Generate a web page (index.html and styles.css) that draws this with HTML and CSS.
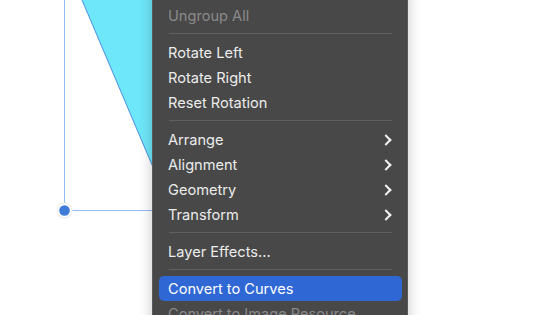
FILE: index.html
```html
<!DOCTYPE html>
<html lang="en">
<head>
  <meta charset="UTF-8" />
  <meta name="viewport" content="width=device-width, initial-scale=1.0" />
  <title>Context Menu</title>
  <link rel="stylesheet" href="styles.css">
</head>
<body>
  <div class="canvas">
    <svg class="art" width="560" height="315" viewBox="0 0 560 315">
      <polygon points="82,0 240,0 240,372" fill="#6de7f9" />
      <line x1="82" y1="0" x2="240" y2="372" stroke="#4b8fe2" stroke-width="1" />
      <line x1="64.5" y1="0" x2="64.5" y2="210" stroke="#93bcf3" stroke-width="1" />
      <line x1="64" y1="210.5" x2="240" y2="210.5" stroke="#93bcf3" stroke-width="1" />
      <circle cx="64.5" cy="210.5" r="8" fill="#eeeeee" />
      <circle cx="64.5" cy="210.5" r="6.8" fill="#ffffff" />
      <circle cx="64.5" cy="210.5" r="5.3" fill="#3f7bd8" />
    </svg>

    <div class="menu">
      <div class="item disabled">Ungroup All</div>
      <div class="sep"></div>
      <div class="item">Rotate Left</div>
      <div class="item">Rotate Right</div>
      <div class="item">Reset Rotation</div>
      <div class="sep"></div>
      <div class="item">Arrange <span class="chev"></span></div>
      <div class="item">Alignment <span class="chev"></span></div>
      <div class="item">Geometry <span class="chev"></span></div>
      <div class="item">Transform <span class="chev"></span></div>
      <div class="sep"></div>
      <div class="item">Layer Effects...</div>
      <div class="sep"></div>
      <div class="item active">Convert to Curves</div>
      <div class="item disabled">Convert to Image Resource</div>
    </div>
  </div>
</body>
</html>
```

FILE: styles.css
```css
body {
  margin: 0;
  font-family: Inter, 'Noto Sans', sans-serif;
  background: #ffffff;
  overflow: hidden;
}
.canvas {
  position: relative;
  width: 560px;
  height: 315px;
  overflow: hidden;
}
.art {
  display: block;
}
.menu {
  position: absolute;
  top: -12px;
  left: 152px;
  width: 243px;
  padding: 14px 5px 6px 6px;
  background: #484848;
  border: 1px solid #5a5a5a;
  border-radius: 6px;
  box-shadow: 0 0 14px rgba(0, 0, 0, 0.22);
  display: flex;
  flex-direction: column;
}
.item {
  height: 25px;
  padding: 0 10px 0 9px;
  display: flex;
  align-items: center;
  justify-content: space-between;
  font-size: 14.6px;
  color: #ececec;
  border-radius: 5px;
  white-space: nowrap;
}
.item.disabled {
  color: #8a8a8a;
}
.item.active {
  background: #2f68d5;
  color: #ffffff;
}
.sep {
  height: 1px;
  margin: 5px 10px 6px;
  background: #5f5f5f;
}
.chev {
  width: 6px;
  height: 6px;
  margin-right: 2px;
  border-top: 2px solid #f2f2f2;
  border-right: 2px solid #f2f2f2;
  transform: rotate(45deg);
}
```
